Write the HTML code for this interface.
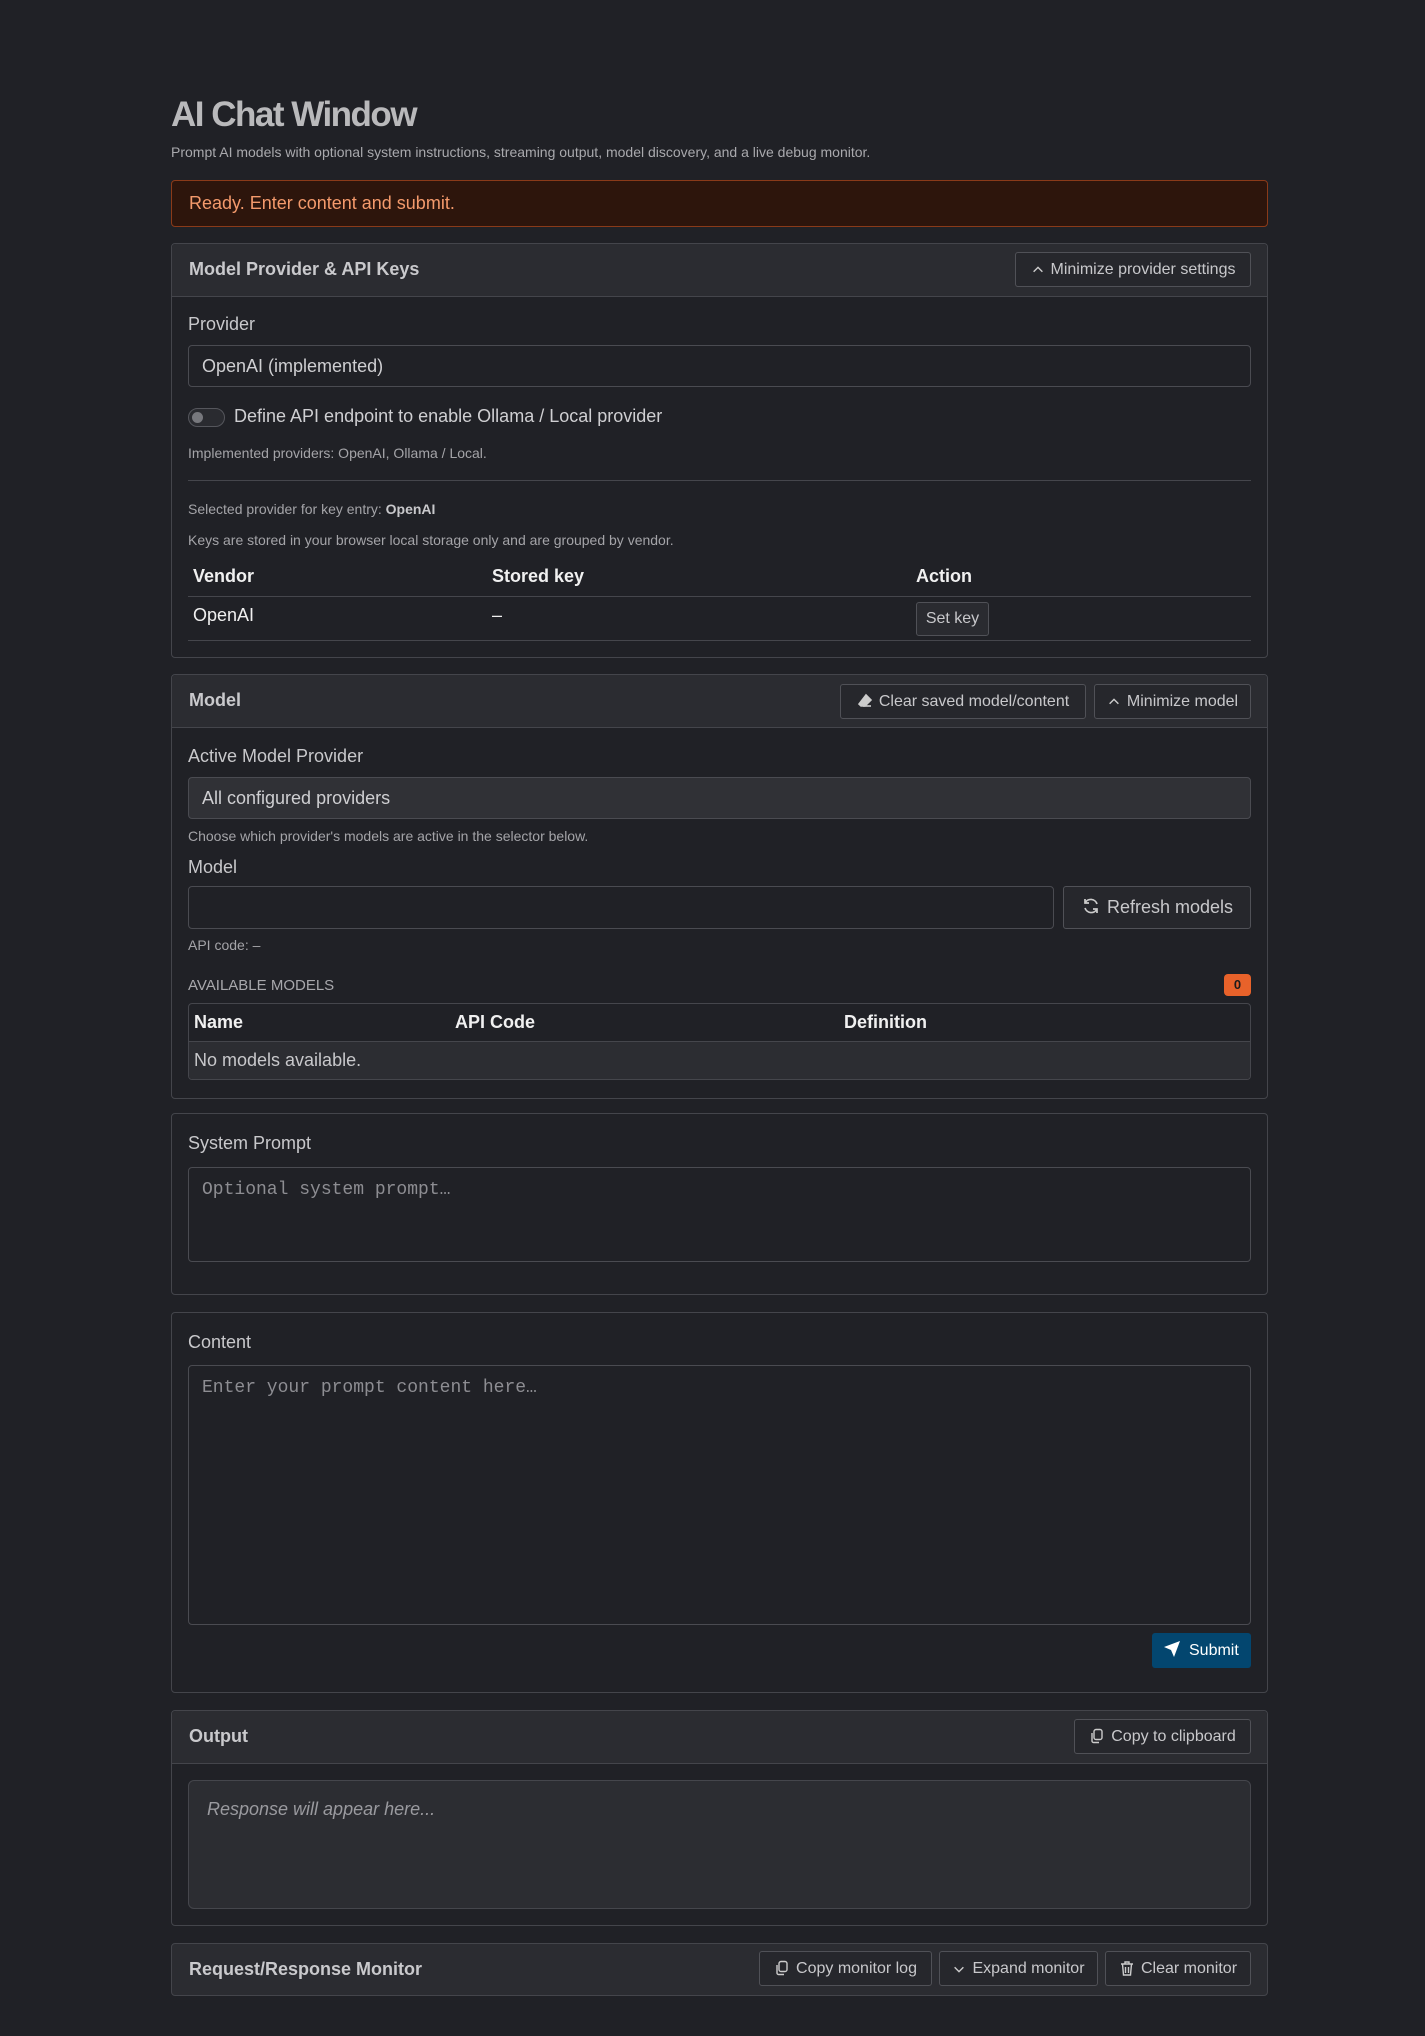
<!DOCTYPE html><html><head><meta charset="utf-8"><style>
*{box-sizing:border-box;margin:0;padding:0}
body{width:1425px;height:2036px;background:#202126;font-family:"Liberation Sans",sans-serif;color:#d4d4d6;position:relative;overflow:hidden}
.a{position:absolute}
.panel{position:absolute;left:171px;width:1097px;border:1px solid #44454b;border-radius:4px;background:#202126}
.hdr{position:absolute;left:0;right:0;top:0;background:#2b2c31;border-bottom:1px solid #44454b;border-radius:4px 4px 0 0}
.ht{position:absolute;left:17px;font-weight:bold;font-size:18px;color:#c9c9cc}
.btn{position:absolute;border:1px solid #505157;border-radius:3px;background:#26272c;color:#c8c8cb;font-size:16px;height:35px;line-height:33px;white-space:nowrap;text-align:center}
.btn svg{vertical-align:-3px;margin-right:6px}
.lbl{position:absolute;left:188px;font-size:18px;color:#c8c8cb}
.sm{position:absolute;left:188px;font-size:14px;color:#a4a4a8}
.inp{position:absolute;left:188px;width:1063px;border:1px solid #4a4b51;border-radius:4px;background:#202126;font-size:18px;color:#cfcfd2;padding-left:13px}
.th{position:absolute;font-weight:bold;font-size:18px;color:#f0f0f0}
.mono{font-family:"Liberation Mono",monospace;font-size:18px;color:#8d8d92}
</style></head><body>
<div class="a" style="left:171px;top:95px;font-size:35px;font-weight:bold;letter-spacing:-1.5px;color:#b9b9bb">AI Chat Window</div>
<div class="a" style="left:171px;top:144px;font-size:14px;color:#a9a9ad">Prompt AI models with optional system instructions, streaming output, model discovery, and a live debug monitor.</div>
<div class="a" style="left:171px;top:180px;width:1097px;height:47px;background:#2d150c;border:1px solid #8a3a19;border-radius:4px;color:#f49a6c;font-size:18px;line-height:45px;padding-left:17px">Ready. Enter content and submit.</div>

<div class="panel" style="top:243px;height:415px">
<div class="hdr" style="height:53px"><div class="ht" style="top:15px">Model Provider &amp; API Keys</div></div></div>
<div class="btn" style="left:1015px;width:236px;top:252px"><svg width="14" height="14" viewBox="0 0 16 16"><path d="M3 10l5-5 5 5" stroke="#ccc" stroke-width="1.6" fill="none"/></svg>Minimize provider settings</div>
<div class="lbl" style="top:314px">Provider</div>
<div class="inp" style="top:345px;height:42px;line-height:40px">OpenAI (implemented)</div>
<div class="a" style="left:188px;top:408px;width:37px;height:19px;border:1px solid #55565c;border-radius:10px;background:#2a2b30"><div class="a" style="left:3px;top:3px;width:11px;height:11px;border-radius:50%;background:#77787d"></div></div>
<div class="a" style="left:234px;top:406px;font-size:18px;color:#cfcfd2">Define API endpoint to enable Ollama / Local provider</div>
<div class="sm" style="top:445px">Implemented providers: OpenAI, Ollama / Local.</div>
<div class="a" style="left:188px;top:480px;width:1063px;height:1px;background:#45464c"></div>
<div class="sm" style="top:501px">Selected provider for key entry: <b style="color:#c8c8cb">OpenAI</b></div>
<div class="sm" style="top:532px">Keys are stored in your browser local storage only and are grouped by vendor.</div>
<div class="th" style="left:193px;top:566px">Vendor</div><div class="th" style="left:492px;top:566px">Stored key</div><div class="th" style="left:916px;top:566px">Action</div>
<div class="a" style="left:188px;top:596px;width:1063px;height:1px;background:#45464c"></div>
<div class="a" style="left:193px;top:605px;font-size:18px;color:#f0f0f0">OpenAI</div>
<div class="a" style="left:492px;top:605px;font-size:18px;color:#f0f0f0">–</div>
<div class="btn" style="left:916px;top:602px;width:73px;height:34px;line-height:32px;background:#2a2b30">Set key</div>
<div class="a" style="left:188px;top:640px;width:1063px;height:1px;background:#45464c"></div>

<div class="panel" style="top:674px;height:425px">
<div class="hdr" style="height:53px"><div class="ht" style="top:15px">Model</div></div></div>
<div class="btn" style="left:1094px;width:157px;top:684px"><svg width="14" height="14" viewBox="0 0 16 16"><path d="M3 10l5-5 5 5" stroke="#ccc" stroke-width="1.6" fill="none"/></svg>Minimize model</div>
<div class="btn" style="left:840px;width:246px;top:684px"><svg width="16" height="16" viewBox="0 0 16 16"><path d="M9 2l5 5-6 6H4L2 11z" stroke="#ccc" stroke-width="1.6" fill="#ccc"/><path d="M6 13h8" stroke="#ccc" stroke-width="1.6"/></svg>Clear saved model/content</div>
<div class="lbl" style="top:746px">Active Model Provider</div>
<div class="inp" style="top:777px;height:42px;line-height:40px;background:#303136">All configured providers</div>
<div class="sm" style="top:828px">Choose which provider's models are active in the selector below.</div>
<div class="lbl" style="top:857px">Model</div>
<div class="inp" style="top:886px;height:43px;width:866px"></div>
<div class="btn" style="left:1063px;width:188px;top:886px;height:43px;line-height:41px;font-size:18px"><svg width="20" height="20" viewBox="0 0 20 20"><path d="M16 8a6.5 6.5 0 0 0-12-1M4 12a6.5 6.5 0 0 0 12 1M4 3v4h4M16 17v-4h-4" stroke="#ccc" stroke-width="1.7" fill="none"/></svg>Refresh models</div>
<div class="sm" style="top:937px">API code: –</div>
<div class="a" style="left:188px;top:977px;font-size:15px;color:#a8a8ac">AVAILABLE MODELS</div>
<div class="a" style="left:1224px;top:974px;width:27px;height:22px;background:#e8622a;border-radius:4px;color:#1b1b1b;font-weight:bold;font-size:13px;text-align:center;line-height:22px">0</div>
<div class="a" style="left:188px;top:1003px;width:1063px;height:77px;border:1px solid #45464c;border-radius:4px;overflow:hidden">
<div class="a" style="left:0;right:0;top:37px;bottom:0;background:#2c2d32;border-top:1px solid #45464c"></div>
<div class="th" style="left:5px;top:8px">Name</div><div class="th" style="left:266px;top:8px">API Code</div><div class="th" style="left:655px;top:8px">Definition</div>
<div class="a" style="left:5px;top:46px;font-size:18px;color:#c8c8cb">No models available.</div></div>

<div class="panel" style="top:1113px;height:182px"></div>
<div class="lbl" style="top:1133px">System Prompt</div>
<div class="inp mono" style="top:1167px;height:95px;padding:12px 13px">Optional system prompt…</div>

<div class="panel" style="top:1312px;height:381px"></div>
<div class="lbl" style="top:1332px">Content</div>
<div class="inp mono" style="top:1365px;height:260px;padding:12px 13px">Enter your prompt content here…</div>
<div class="a" style="left:1152px;top:1633px;width:99px;height:35px;background:#03466f;border-radius:3px;color:#fff;font-size:16px;line-height:35px;padding-left:11px"><svg width="18" height="18" viewBox="0 0 18 18" style="vertical-align:-3px;margin-right:8px"><path d="M17 1L1 7l7 3 3 7z" fill="#fff"/></svg>Submit</div>

<div class="panel" style="top:1710px;height:216px">
<div class="hdr" style="height:53px"><div class="ht" style="top:15px">Output</div></div></div>
<div class="btn" style="left:1074px;width:177px;top:1719px"><svg width="16" height="16" viewBox="0 0 16 16"><rect x="5" y="1.5" width="8" height="10" rx="2" stroke="#ccc" stroke-width="1.4" fill="none"/><path d="M3 5v8a1.5 1.5 0 0 0 1.5 1.5H10" stroke="#ccc" stroke-width="1.4" fill="none"/></svg>Copy to clipboard</div>
<div class="a" style="left:188px;top:1780px;width:1063px;height:129px;border:1px solid #45464c;border-radius:6px;background:#2c2d32;padding:18px 18px;font-style:italic;font-size:18px;color:#9a9a9f">Response will appear here...</div>

<div class="panel" style="top:1943px;height:53px;background:#2b2c31">
<div class="ht" style="top:15px">Request/Response Monitor</div></div>
<div class="btn" style="left:1105px;width:146px;top:1951px"><svg width="16" height="16" viewBox="0 0 16 16"><path d="M2 4h12M6 4V2h4v2M3.5 4l1 11h7l1-11M6.5 7v6M9.5 7v6" stroke="#ccc" stroke-width="1.4" fill="none"/></svg>Clear monitor</div>
<div class="btn" style="left:939px;width:159px;top:1951px"><svg width="14" height="14" viewBox="0 0 16 16"><path d="M3 6l5 5 5-5" stroke="#ccc" stroke-width="1.6" fill="none"/></svg>Expand monitor</div>
<div class="btn" style="left:759px;width:173px;top:1951px"><svg width="16" height="16" viewBox="0 0 16 16"><rect x="5" y="1.5" width="8" height="10" rx="2" stroke="#ccc" stroke-width="1.4" fill="none"/><path d="M3 5v8a1.5 1.5 0 0 0 1.5 1.5H10" stroke="#ccc" stroke-width="1.4" fill="none"/></svg>Copy monitor log</div>
</body></html>
